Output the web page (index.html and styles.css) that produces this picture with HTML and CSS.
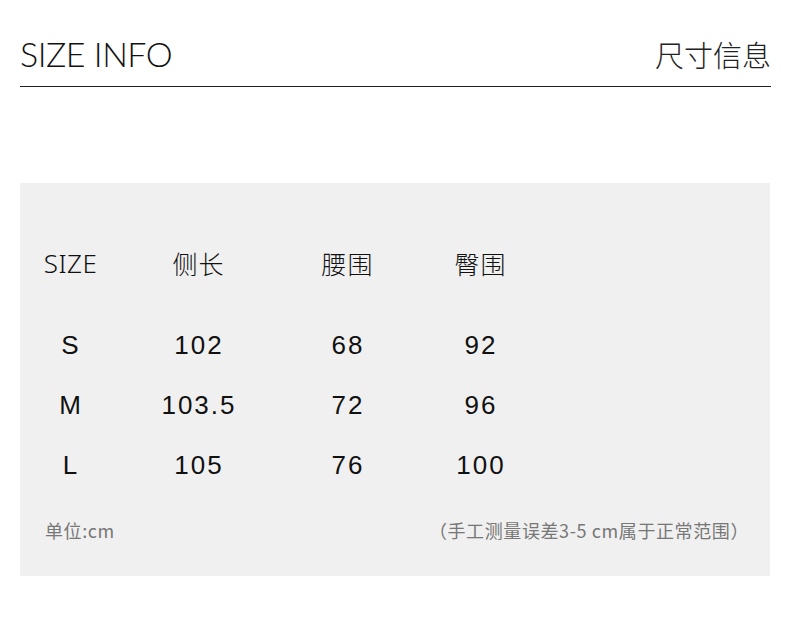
FILE: index.html
```html
<!DOCTYPE html>
<html lang="zh">
<head>
<meta charset="utf-8">
<title>SIZE INFO</title>
<link rel="stylesheet" href="styles.css">
</head>
<body>
<header class="head">
  <h1 class="title">SIZE INFO</h1>
  <div class="title-cn">尺寸信息</div>
</header>
<section class="panel">
  <div class="table">
    <div class="cell hd latin">SIZE</div>
    <div class="cell hd">侧长</div>
    <div class="cell hd">腰围</div>
    <div class="cell hd">臀围</div>

    <div class="cell">S</div>
    <div class="cell">102</div>
    <div class="cell">68</div>
    <div class="cell">92</div>

    <div class="cell">M</div>
    <div class="cell">103.5</div>
    <div class="cell">72</div>
    <div class="cell">96</div>

    <div class="cell">L</div>
    <div class="cell">105</div>
    <div class="cell">76</div>
    <div class="cell">100</div>
  </div>
  <div class="foot">
    <span>单位:cm</span>
    <span>（手工测量误差3-5 cm属于正常范围）</span>
  </div>
</section>
</body>
</html>
```
FILE: styles.css
```css
* { box-sizing: border-box; }
html, body { margin: 0; padding: 0; background: #fff; }
body { width: 790px; height: 635px; overflow: hidden; color: #111; }

.head {
  display: flex;
  justify-content: space-between;
  align-items: flex-end;
  margin: 0 19px 0 20px;
  height: 87px;
  padding-bottom: 12px;
  border-bottom: 1px solid #222;
}
.title {
  margin: 0;
  font-family: "Lato", "Noto Sans", sans-serif;
  font-weight: 300;
  font-size: 34px;
  line-height: 40px;
  letter-spacing: -0.5px;
  color: #111;
}
.title-cn {
  font-family: "Noto Sans CJK SC", sans-serif;
  font-weight: 300;
  font-size: 29px;
  line-height: 40px;
  color: #222;
}

.panel {
  margin: 96px 20px 0;
  height: 393px;
  background: #f0f0f0;
  padding-top: 63px;
}
.table {
  display: grid;
  grid-template-columns: 100px 156px 142px 124px;
  grid-template-rows: 80px 60px 60px 60px;
}
.cell {
  text-align: center;
  font-family: "Liberation Sans", Arial, sans-serif;
  font-size: 26px;
  line-height: 38px;
  letter-spacing: 2px;
  padding-left: 2px;
  color: #111;
}
.hd {
  font-family: "Noto Sans CJK SC", sans-serif;
  font-weight: 300;
  font-size: 25px;
  letter-spacing: 1px;
  padding-left: 1px;
  line-height: 34px;
}
.hd.latin {
  font-family: "Noto Sans", "Liberation Sans", sans-serif;
  font-weight: 300;
  font-size: 26px;
  letter-spacing: 0.5px;
}

.foot {
  display: flex;
  justify-content: space-between;
  padding: 0 21px 0 25px;
  margin-top: 12px;
  font-family: "Noto Sans CJK SC", sans-serif;
  font-size: 18px;
  letter-spacing: 0.6px;
  line-height: 24px;
  color: #777;
}
```
